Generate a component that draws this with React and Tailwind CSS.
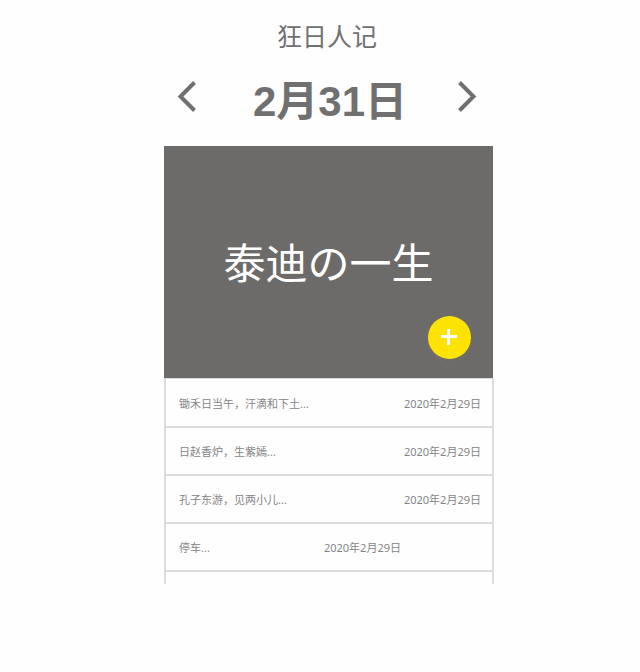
const entries = [
  { id: 1, title: '锄禾日当午，汗滴和下土...', date: '2020年2月29日', spacing: 'pr-[11px]' },
  { id: 2, title: '日赵香炉，生紫嫣...', date: '2020年2月29日', spacing: 'pr-[11px]' },
  { id: 3, title: '孔子东游，见两小儿...', date: '2020年2月29日', spacing: 'pr-[11px]' },
  { id: 4, title: '停车...', date: '2020年2月29日', spacing: 'pr-[91px]' },
];

function Chevron({ points }) {
  return (
    <svg width="20" height="32" viewBox="0 0 20 32" fill="none" stroke="#707070" strokeWidth="4" aria-hidden="true">
      <polyline points={points} />
    </svg>
  );
}

function DayPicker() {
  return (
    <div className="flex h-[86px] items-center justify-between pr-[17px] pb-[12px] pl-[13px]">
      <button type="button" aria-label="前一天">
        <Chevron points="17.5,1.5 3.5,15.5 17.5,29.5" />
      </button>
      <h2 className="pt-[10px] pl-[6px] text-[42px] leading-[48px] font-bold">2月31日</h2>
      <button type="button" aria-label="后一天">
        <Chevron points="2.5,1.5 16.5,15.5 2.5,29.5" />
      </button>
    </div>
  );
}

function Cover() {
  return (
    <section className="relative mr-px flex h-[232px] items-center justify-center bg-[#6d6b69] text-white">
      <p className="pt-[6px] text-[42px] leading-[48px]">泰迪の一生</p>
      <svg className="absolute right-[22px] bottom-[4px]" width="44" height="40" viewBox="0 0 44 40" fill="none" stroke="#73716f" aria-hidden="true">
        <path d="M3 17 L22 35 L41 17" />
      </svg>
      <button
        type="button"
        aria-label="添加日记"
        className="absolute right-[22px] bottom-[19px] flex size-[43px] items-center justify-center rounded-full bg-[#ffe300]"
      >
        <svg width="17" height="17" viewBox="0 0 17 17" stroke="white" strokeWidth="3" aria-hidden="true">
          <path d="M7.5 0 V16 M0 7.5 H16" />
        </svg>
      </button>
    </section>
  );
}

export default function App() {
  return (
    <main className="min-h-screen bg-[#fefefe] pt-5 pl-[18px] font-['Liberation_Sans','Noto_Sans_CJK_SC',sans-serif] text-[#707070]">
      <div className="mx-auto w-full max-w-[330px]">
        <h1 className="h-[40px] pr-1 text-center text-[25px] leading-[34px]">狂日人记</h1>
        <DayPicker />
        <Cover />
        <ul className="border-x-2 border-t border-[#dcdcdc] pt-px font-['Noto_Sans','Noto_Sans_CJK_SC',sans-serif] text-[11px] leading-4 text-[#858585]">
          {entries.map((entry) => (
            <li
              key={entry.id}
              className={`flex h-12 items-center justify-between border-b-2 border-[#dcdcdc] pt-0.5 pl-[13px] ${entry.spacing}`}
            >
              <span>{entry.title}</span>
              <time dateTime="2020-02-29">{entry.date}</time>
            </li>
          ))}
          <li className="h-3" />
        </ul>
      </div>
    </main>
  );
}
